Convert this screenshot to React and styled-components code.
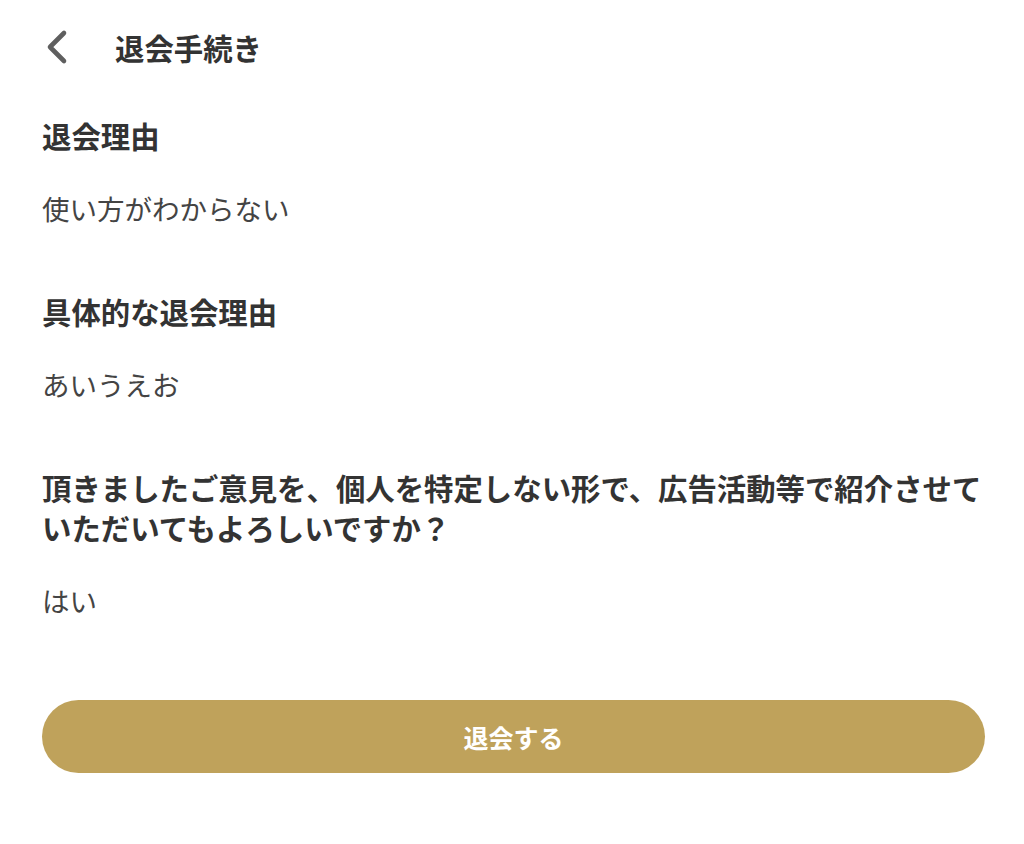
import React from 'react'
import styled, { createGlobalStyle } from 'styled-components'

const GlobalStyle = createGlobalStyle`
  body {
    margin: 0;
    background: #fff;
    font-family: "Noto Sans CJK JP", "Noto Sans", sans-serif;
    color: #333;
  }
`;

const Page = styled.div`
  padding: 0 39px 0 42px;
`;

const Header = styled.header`
  height: 94px;
  display: flex;
  align-items: center;
`;

const BackButton = styled.button`
  width: 73px;
  height: 40px;
  padding: 0 0 0 2px;
  border: none;
  background: none;
  display: flex;
  align-items: center;
  cursor: pointer;
`;

const Title = styled.h1`
  margin: 0;
  font-size: 29.4px;
  font-weight: 700;
  line-height: 40px;
  color: #333;
`;

const Main = styled.main`
  padding-top: 21px;
  display: flex;
  flex-direction: column;
  gap: 63px;
`;

const Section = styled.section`
  display: flex;
  flex-direction: column;
  gap: 33px;
`;

const Label = styled.h2`
  margin: 0;
  font-size: 29.4px;
  font-weight: 700;
  line-height: 40px;
  color: #333;
`;

const Value = styled.p`
  margin: 0;
  font-size: 27.5px;
  line-height: 40px;
  color: #444;
`;

const SubmitButton = styled.button`
  margin-top: 80px;
  width: 100%;
  height: 73px;
  border: none;
  border-radius: 37px;
  background: #bfa25b;
  color: #fff;
  font-family: inherit;
  font-size: 25px;
  font-weight: 700;
  cursor: pointer;
`;

const answers = [
  { label: '退会理由', value: '使い方がわからない' },
  { label: '具体的な退会理由', value: 'あいうえお' },
  {
    label: '頂きましたご意見を、個人を特定しない形で、広告活動等で紹介させていただいてもよろしいですか？',
    value: 'はい',
  },
];

const App = () => {
  return (
    <Page>
      <GlobalStyle />
      <Header>
        <BackButton aria-label="戻る">
          <svg width="26" height="36" viewBox="0 0 26 36" fill="none">
            <path d="M20 4 L6 18 L20 32" stroke="#5f5f5f" strokeWidth="4.6" strokeLinecap="round" strokeLinejoin="round" />
          </svg>
        </BackButton>
        <Title>退会手続き</Title>
      </Header>
      <Main>
        {answers.map((a) => (
          <Section key={a.label}>
            <Label>{a.label}</Label>
            <Value>{a.value}</Value>
          </Section>
        ))}
      </Main>
      <SubmitButton>退会する</SubmitButton>
    </Page>
  );
};

export default App;
